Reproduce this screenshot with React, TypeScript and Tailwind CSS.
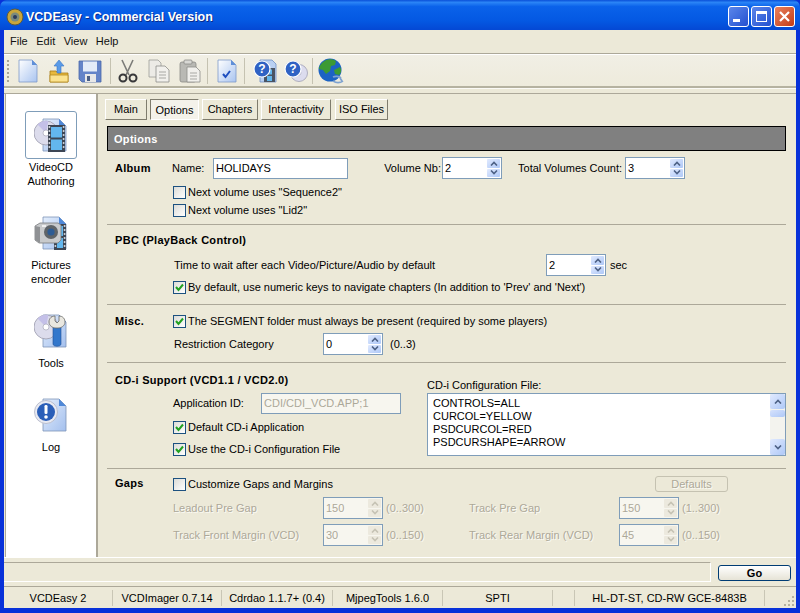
import React from "react";

const SANS = "font-['Liberation_Sans','Noto_Sans',sans-serif]";
const OFF = "text-[#aca899] [text-shadow:1px_1px_0_#fbfaf4]";
const HEAD = "pl-[8px] font-bold tracking-[0.3px]";

function DocShape({ id = "doc" }: { id?: string }) {
  return (
    <>
      <defs>
        <linearGradient id={id} x1="0" y1="0" x2="1" y2="1">
          <stop offset="0" stopColor="#ffffff" />
          <stop offset="1" stopColor="#a9c4f0" />
        </linearGradient>
      </defs>
      <path d="M3 1h13l5 5v17H3z" fill={`url(#${id})`} stroke="#7d9bc9" strokeWidth="0.8" />
      <path d="M16 1v5h5z" fill="#5f8fd8" />
    </>
  );
}

function NewIcon() {
  return (
    <svg width="24" height="24" viewBox="0 0 24 24">
      <DocShape id="newdoc" />
    </svg>
  );
}

function OpenIcon() {
  return (
    <svg width="24" height="24" viewBox="0 0 24 24">
      <path d="M3 12h6l2 2h10v9H3z" fill="#e8b93c" stroke="#a67c17" strokeWidth="0.8" />
      <path d="M3 16h18v7H3z" fill="#fbe38f" stroke="#b58a20" strokeWidth="0.8" />
      <path d="M12 1l5 6h-3v7h-4V7H7z" fill="#5a9be8" stroke="#3a76c4" strokeWidth="0.6" />
    </svg>
  );
}

function SaveIcon() {
  return (
    <svg width="24" height="24" viewBox="0 0 24 24">
      <path d="M1 2h22v21H4l-3-3z" fill="#6484c8" stroke="#4a68a8" strokeWidth="0.8" />
      <rect x="5" y="2.5" width="14" height="10" fill="#e4ecf8" />
      <rect x="7" y="15" width="11" height="8" fill="#e8e8e8" />
      <rect x="9" y="17" width="3" height="5" fill="#4b5f86" />
    </svg>
  );
}

function CutIcon() {
  return (
    <svg width="24" height="24" viewBox="0 0 24 24" fill="none">
      <path d="M6 1l7 15M17 1l-7 15" stroke="#7b7b78" strokeWidth="1.6" />
      <circle cx="7" cy="19" r="3.5" stroke="#38383a" strokeWidth="2" />
      <circle cx="17" cy="19" r="3.5" stroke="#38383a" strokeWidth="2" />
    </svg>
  );
}

function CopyIcon() {
  return (
    <svg width="24" height="24" viewBox="0 0 24 24">
      <path d="M2 1h9l3 3v14H2z" fill="#ecebe6" stroke="#9c9c98" strokeWidth="0.8" />
      <path d="M9 7h9l4 4v12H9z" fill="#f1f0ec" stroke="#8e8e8a" strokeWidth="0.8" />
      <path d="M12 13h7M12 16h7M12 19h7" stroke="#a8a8a4" strokeWidth="1" />
    </svg>
  );
}

function PasteIcon() {
  return (
    <svg width="24" height="24" viewBox="0 0 24 24">
      <rect x="2" y="3" width="16" height="20" rx="2" fill="#b9b9b4" stroke="#8a8a86" strokeWidth="0.8" />
      <rect x="6" y="1" width="8" height="4" rx="1" fill="#d8d8d4" stroke="#8a8a86" strokeWidth="0.8" />
      <path d="M9 8h9l4 4v11H9z" fill="#f1f0ec" stroke="#8e8e8a" strokeWidth="0.8" />
      <path d="M12 14h7M12 17h7M12 20h7" stroke="#a8a8a4" strokeWidth="1" />
    </svg>
  );
}

function CheckDocIcon() {
  return (
    <svg width="24" height="24" viewBox="0 0 24 24">
      <DocShape id="checkdoc" />
      <path d="M8 15l2.5 3L15 12" fill="none" stroke="#1f4fbf" strokeWidth="2" />
    </svg>
  );
}

function QuestionBall({ cx, cy, r }: { cx: number; cy: number; r: number }) {
  return (
    <>
      <circle cx={cx} cy={cy} r={r} fill="#2f62c4" stroke="#ffffff" strokeWidth="1.2" />
      <text x={cx} y={cy + r * 0.55} textAnchor="middle" fontSize={r * 1.5} fontWeight="700" fill="#ffffff" fontFamily="Liberation Sans">
        ?
      </text>
    </>
  );
}

function HelpFilmIcon() {
  return (
    <svg width="24" height="24" viewBox="0 0 24 24">
      <path d="M7 1h12l4 4v18H7z" fill="#b9d0f2" stroke="#6f8fc4" strokeWidth="0.8" />
      <rect x="11" y="9" width="11" height="14" fill="#4a5464" />
      <rect x="14" y="10.5" width="5" height="5" fill="#63b7ee" />
      <rect x="14" y="17" width="5" height="5" fill="#63b7ee" />
      <QuestionBall cx={9} cy={10} r={8} />
    </svg>
  );
}

function HelpCdIcon() {
  return (
    <svg width="24" height="24" viewBox="0 0 24 24">
      <circle cx="15" cy="14" r="8.5" fill="#dcdcee" stroke="#a0a0b4" strokeWidth="0.8" />
      <circle cx="15" cy="14" r="2" fill="#ffffff" stroke="#a0a0b4" strokeWidth="0.6" />
      <QuestionBall cx={9} cy={10} r={8} />
    </svg>
  );
}

function GlobeIcon() {
  return (
    <svg width="26" height="26" viewBox="0 0 26 26">
      <circle cx="12" cy="12" r="11.5" fill="#1c63c4" />
      <path d="M5 4c3-3 9-4 13-1l-1 4-4 1-1 5-4 3-3-4-4-1c0-3 2-5 4-7z" fill="#3c9a34" />
      <path d="M16 12l6-3c2 3 1 6-1 8l-4-1z" fill="#3c9a34" />
      <path d="M15 19c2-1 6-1 8 1M15 23c3 2 7 2 10 0M24 23l-2-3" fill="none" stroke="#7ea2d0" strokeWidth="1.8" />
    </svg>
  );
}

function SideBase({ id }: { id: string }) {
  return (
    <>
      <defs>
        <linearGradient id={id} x1="0" y1="0" x2="1" y2="1">
          <stop offset="0" stopColor="#e4eefc" />
          <stop offset="1" stopColor="#a4c0ee" />
        </linearGradient>
      </defs>
      <path d="M9 1h16l7 7v25H9z" fill={`url(#${id})`} stroke="#7d94b8" strokeWidth="0.8" />
      <path d="M25 1v7h7z" fill="#4f88d8" />
    </>
  );
}

function Cd({ cx, cy, r }: { cx: number; cy: number; r: number }) {
  return (
    <>
      <circle cx={cx} cy={cy} r={r} fill="#dcdcec" stroke="#9a9aac" strokeWidth="0.8" />
      <path d={`M${cx} ${cy}L${cx - r * 0.7} ${cy - r * 0.7}A${r} ${r} 0 0 1 ${cx + r * 0.2} ${cy - r}z`} fill="#c4c0e8" />
      <circle cx={cx} cy={cy} r={r * 0.25} fill="#ffffff" stroke="#9a9aac" strokeWidth="0.6" />
    </>
  );
}

// film strip with its sprocket holes down both edges
function Film({ x, y, w, h }: { x: number; y: number; w: number; h: number }) {
  const holes = Array.from({ length: Math.floor(h / 4) });
  const frame = (h - 6) / 2;
  return (
    <>
      <rect x={x} y={y} width={w} height={h} fill="#3d4654" />
      {holes.map((_, i) => (
        <React.Fragment key={i}>
          <rect x={x + 0.6} y={y + 1 + i * 4} width="1.6" height="2" fill="#c8ccd4" />
          <rect x={x + w - 2.2} y={y + 1 + i * 4} width="1.6" height="2" fill="#c8ccd4" />
        </React.Fragment>
      ))}
      <rect x={x + 3} y={y + 2} width={w - 6} height={frame} fill="#63b7ee" />
      <rect x={x + 3} y={y + 4 + frame} width={w - 6} height={frame} fill="#63b7ee" />
    </>
  );
}

function VideoCdIcon() {
  return (
    <svg width="34" height="34" viewBox="0 0 34 34">
      <SideBase id="sb1" />
      <Cd cx={12} cy={15} r={12} />
      <Film x={14} y={7} w={17} h={27} />
    </svg>
  );
}

function CameraIcon() {
  return (
    <svg width="34" height="34" viewBox="0 0 34 34">
      <SideBase id="sb2" />
      <Film x={20} y={8} w={12} h={26} />
      <path d="M1 10l5-3h18l3 2v15l-3 3H5l-4-3z" fill="#c8cacc" stroke="#77797c" strokeWidth="0.8" />
      <path d="M1 10l5 1v16l-5-3z" fill="#8f9194" />
      <rect x="8" y="9" width="4" height="2" fill="#f0f0f0" />
      <circle cx="17" cy="16" r="7" fill="#5f6468" />
      <circle cx="17" cy="16" r="3.6" fill="#2d5c94" />
    </svg>
  );
}

function ToolsIcon() {
  return (
    <svg width="34" height="34" viewBox="0 0 34 34">
      <SideBase id="sb3" />
      <Cd cx={12} cy={13} r={12} />
      <path d="M19 12h8v18c0 3-8 3-8 0z" fill="#3277cc" stroke="#1f4f96" strokeWidth="0.6" />
      <path d="M15 8c0-4 3-6 6-6v5l2 2 2-2V2c4 0 6 3 6 6 0 4-4 6-7 6h-2c-3 0-7-2-7-6z" fill="#e9e7e0" stroke="#6a6a66" strokeWidth="0.8" />
    </svg>
  );
}

function LogIcon() {
  return (
    <svg width="34" height="34" viewBox="0 0 34 34">
      <SideBase id="sb4" />
      <circle cx="12" cy="14" r="11.5" fill="#e8eaf2" stroke="#b0b4c4" strokeWidth="0.8" />
      <circle cx="12" cy="14" r="9" fill="#2b5fb8" />
      <rect x="10.5" y="7" width="3" height="9" rx="1.2" fill="#ffffff" />
      <circle cx="12" cy="19" r="1.8" fill="#ffffff" />
    </svg>
  );
}

function SideItem({ icon, lines, selected, className }: { icon: React.ReactNode; lines: string[]; selected?: boolean; className: string }) {
  return (
    <div className={`flex flex-col items-center ${className}`}>
      <div className={`w-[52px] h-[48px] flex items-center justify-center rounded-[3px] border ${selected ? "border-[#7f9db9]" : "border-transparent"}`}>
        {icon}
      </div>
      {lines.map((l) => (
        <div key={l} className="h-[14px] leading-[14px] mt-[1px] -mb-[1px] text-center">
          {l}
        </div>
      ))}
    </div>
  );
}

function Check({ label, checked }: { label: string; checked?: boolean }) {
  return (
    <div className="flex items-center h-[18px]">
      <div className="w-[13px] h-[13px] border border-[#1c5180] bg-gradient-to-br from-[#dcdcd7] to-white flex items-center justify-center">
        {checked && (
          <svg width="11" height="11" viewBox="0 0 11 11">
            <path d="M2 5l2.5 3L9 2.5" fill="none" stroke="#21a121" strokeWidth="2" />
          </svg>
        )}
      </div>
      <span className="ml-[2px]">{label}</span>
    </div>
  );
}

function Arrow({ up, color }: { up?: boolean; color: string }) {
  return (
    <svg width="8" height="5" viewBox="0 0 8 5">
      <path d={up ? "M1 4.5L4 1.5l3 3" : "M1 .5l3 3 3-3"} fill="none" stroke={color} strokeWidth="1.6" />
    </svg>
  );
}

function Spin({ value, disabled }: { value: string; disabled?: boolean }) {
  const btn = disabled ? "bg-[#ece9de]" : "bg-gradient-to-br from-[#e1eafe] to-[#aec8f7]";
  const arrow = disabled ? "#c5c2b4" : "#4d6185";
  return (
    <div className={`w-[60px] h-[22px] shrink-0 border border-[#7f9db9] flex items-stretch p-[1px] ${disabled ? "bg-[#f7f6ef] text-[#aca899]" : "bg-white"}`}>
      <div className="flex-1 pl-[1px] leading-[18px]">{value}</div>
      <div className="w-[13px] flex flex-col gap-[1px]">
        <div className={`flex-1 flex items-center justify-center rounded-[1px] ${btn}`}>
          <Arrow up color={arrow} />
        </div>
        <div className={`flex-1 flex items-center justify-center rounded-[1px] ${btn}`}>
          <Arrow color={arrow} />
        </div>
      </div>
    </div>
  );
}

function StatusCell({ w, text }: { w: string; text?: string }) {
  return (
    <div className={`${w} h-[16px] border-r border-[#c9c6b5] text-center leading-[16px] whitespace-nowrap`}>{text}</div>
  );
}

export default function App() {
  return (
    <div className={`w-[800px] h-[613px] overflow-hidden flex flex-col bg-[#0831d9] text-[11px] text-black ${SANS}`}>
      {/* title bar */}
      <div className="h-[30px] shrink-0 flex items-center pt-[3px] rounded-t-[7px] bg-[linear-gradient(#0a50d8_0%,#2a84f6_8%,#0a62ea_22%,#0458e2_70%,#0448d4_100%)] pl-[6px] pr-[5px]">
        <svg width="18" height="18" viewBox="0 0 18 18">
          <circle cx="9" cy="9" r="8" fill="#c9a63a" stroke="#5d5a3c" strokeWidth="1" />
          <circle cx="9" cy="9" r="4.5" fill="#7a8a7c" />
          <circle cx="9" cy="9" r="2" fill="#2a3a5c" />
        </svg>
        <div className="ml-[2px] mt-[1px] text-white font-bold text-[12.5px] [text-shadow:1px_1px_0_#0a2a8a]">VCDEasy - Commercial Version</div>
        <div className="ml-auto flex gap-[2px]">
          <div className="w-[21px] h-[21px] rounded-[3px] border border-white bg-gradient-to-br from-[#5c86ea] to-[#2450d0] flex items-end pl-[4px] pb-[4px]">
            <div className="w-[7px] h-[3px] bg-white" />
          </div>
          <div className="w-[21px] h-[21px] rounded-[3px] border border-white bg-gradient-to-br from-[#5c86ea] to-[#2450d0] flex items-center justify-center">
            <div className="w-[11px] h-[11px] border border-white border-t-[3px]" />
          </div>
          <div className="w-[21px] h-[21px] rounded-[3px] border border-white bg-gradient-to-br from-[#e9805c] to-[#c23a12] flex items-center justify-center">
            <svg width="13" height="13" viewBox="0 0 13 13">
              <path d="M2 2l9 9M11 2l-9 9" stroke="#ffffff" strokeWidth="2.2" />
            </svg>
          </div>
        </div>
      </div>

      {/* window body */}
      <div className="flex-1 min-h-0 mx-[4px] mb-[5px] flex flex-col bg-[#ece9d8]">
        {/* menu */}
        <div className="h-[24px] shrink-0 flex items-center pl-[6px] gap-[8.5px] border-b border-[#aca899] text-[#111]">
          <span>File</span>
          <span>Edit</span>
          <span>View</span>
          <span>Help</span>
        </div>
        {/* toolbar */}
        <div className="h-[34px] shrink-0 flex items-center pl-[3px] border-t border-white border-b-2 border-b-[#b5b2a0] bg-gradient-to-b from-[#f1efe5] to-[#eeebdc]">
          <div className="w-[2px] h-[22px] mr-[3px] border-l-2 border-dotted border-[#a8a596]" />
          <div className="w-[31px] flex justify-center"><NewIcon /></div>
          <div className="w-[31px] flex justify-center"><OpenIcon /></div>
          <div className="w-[31px] flex justify-center"><SaveIcon /></div>
          <div className="w-[7px] h-[26px] border-r border-[#c5c2b1] mr-[1px] -ml-[1px]" />
          <div className="w-[31px] flex justify-center"><CutIcon /></div>
          <div className="w-[31px] flex justify-center"><CopyIcon /></div>
          <div className="w-[31px] flex justify-center"><PasteIcon /></div>
          <div className="w-[3px] h-[26px] border-r border-[#c5c2b1]" />
          <div className="w-[31px] flex justify-center ml-[3px]"><CheckDocIcon /></div>
          <div className="w-[3px] h-[26px] border-r border-[#c5c2b1]" />
          <div className="w-[31px] flex justify-center ml-[4px]"><HelpFilmIcon /></div>
          <div className="w-[31px] flex justify-center"><HelpCdIcon /></div>
          <div className="w-[2px] h-[26px] border-r border-[#c5c2b1]" />
          <div className="w-[31px] flex justify-center ml-[2px]"><GlobeIcon /></div>
        </div>
        <div className="h-[6px] shrink-0 border-t border-[#fbfaf5] border-b border-b-[#aca899]" />

        {/* main */}
        <div className="h-[463px] shrink-0 flex">
          <div className="w-[93px] shrink-0 ml-[1px] bg-white border-l border-[#aca899] border-r-2 border-r-[#aca899]">
            <SideItem className="pt-[17px] h-[115px]" selected icon={<VideoCdIcon />} lines={["VideoCD", "Authoring"]} />
            <SideItem className="h-[98px]" icon={<CameraIcon />} lines={["Pictures", "encoder"]} />
            <SideItem className="h-[84px]" icon={<ToolsIcon />} lines={["Tools"]} />
            <SideItem className="" icon={<LogIcon />} lines={["Log"]} />
          </div>

          <div className="flex-1 min-w-0 pl-[9px] pr-[10px]">
            {/* tabs */}
            <div className="flex mt-[5px] h-[21px] -ml-[2px] text-center leading-[19px]">
              <div className="w-[42px] bg-[#ece9d8] border border-t-white border-l-white border-r-[#7f7c6d] border-b-[#7f7c6d]">Main</div>
              <div className="w-[49px] ml-[3px] bg-[#f4f2ea] border border-t-[#7f7c6d] border-l-[#7f7c6d] border-r-white border-b-white pt-[1px]">Options</div>
              <div className="w-[56px] ml-[3px] border border-t-white border-l-white border-r-[#7f7c6d] border-b-[#7f7c6d]">Chapters</div>
              <div className="w-[70px] ml-[3px] border border-t-white border-l-white border-r-[#7f7c6d] border-b-[#7f7c6d]">Interactivity</div>
              <div className="w-[53px] ml-[4px] border border-t-white border-l-white border-r-[#7f7c6d] border-b-[#7f7c6d]">ISO Files</div>
            </div>
            {/* header */}
            <div className="mt-[6px] h-[25px] bg-[#808080] border border-black text-white font-bold tracking-[0.3px] pl-[6px] leading-[25px]">Options</div>

            {/* album */}
            <div className="h-[74px] border-b border-[#aca899] pt-[6px]">
              <div className="flex items-center h-[22px]">
                <div className={`w-[65px] ${HEAD}`}>Album</div>
                <div className="w-[41px]">Name:</div>
                <div className="w-[135px] h-[21px] border border-[#7f9db9] bg-white pl-[2px] leading-[19px]">HOLIDAYS</div>
                <div className="w-[94px] text-right pr-[1px]">Volume Nb:</div>
                <Spin value="2" />
                <div className="w-[123px] text-right pr-[3px]">Total Volumes Count:</div>
                <Spin value="3" />
              </div>
              <div className="mt-[4px] ml-[66px]">
                <Check label={'Next volume uses "Sequence2"'} />
                <Check label={'Next volume uses "Lid2"'} />
              </div>
            </div>

            {/* pbc */}
            <div className="h-[80px] border-b border-[#aca899] pt-[7px]">
              <div className={`h-[16px] leading-[16px] ${HEAD}`}>PBC (PlayBack Control)</div>
              <div className="flex items-center h-[22px] mt-[6px] pl-[67px]">
                <div className="w-[372px]">Time to wait after each Video/Picture/Audio by default</div>
                <Spin value="2" />
                <div className="ml-[4px]">sec</div>
              </div>
              <div className="mt-[2px] ml-[66px]">
                <Check checked label="By default, use numeric keys to navigate chapters (In addition to 'Prev' and 'Next')" />
              </div>
            </div>

            {/* misc */}
            <div className="h-[58px] border-b border-[#aca899] pt-[7px]">
              <div className="flex items-center h-[18px]">
                <div className={`w-[66px] ${HEAD}`}>Misc.</div>
                <Check checked label="The SEGMENT folder must always be present (required by some players)" />
              </div>
              <div className="flex items-center h-[22px] mt-[3px] pl-[67px]">
                <div className="w-[149px]">Restriction Category</div>
                <Spin value="0" />
                <div className="ml-[7px]">(0..3)</div>
              </div>
            </div>

            {/* cd-i */}
            <div className="h-[106px] border-b border-[#aca899] flex">
              <div className="w-[320px] shrink-0 pt-[9px]">
                <div className={`h-[16px] leading-[16px] ${HEAD}`}>CD-i Support (VCD1.1 / VCD2.0)</div>
                <div className="flex items-center h-[21px] mt-[5px] pl-[66px]">
                  <div className="w-[88px]">Application ID:</div>
                  <div className="w-[140px] h-[21px] border border-[#7f9db9] bg-[#f7f6ef] text-[#aca899] pl-[2px] leading-[19px]">CDI/CDI_VCD.APP;1</div>
                </div>
                <div className="mt-[4px] ml-[66px]">
                  <Check checked label="Default CD-i Application" />
                </div>
                <div className="mt-[4px] ml-[66px]">
                  <Check checked label="Use the CD-i Configuration File" />
                </div>
              </div>
              <div className="flex-1 min-w-0 pt-[14px]">
                <div className="h-[16px] leading-[16px]">CD-i Configuration File:</div>
                <div className="h-[63px] border border-[#7f9db9] bg-white flex">
                  <div className="flex-1 pl-[5px] pt-[3px] leading-[13px]">
                    <div>CONTROLS=ALL</div>
                    <div>CURCOL=YELLOW</div>
                    <div>PSDCURCOL=RED</div>
                    <div>PSDCURSHAPE=ARROW</div>
                  </div>
                  <div className="w-[15px] flex flex-col bg-[#f3f3ee]">
                    <div className="h-[15px] bg-gradient-to-br from-[#e1eafe] to-[#aec8f7] rounded-[2px] flex items-center justify-center"><Arrow up color="#4d6185" /></div>
                    <div className="h-[7px] mt-[1px] bg-gradient-to-br from-[#d6e2fc] to-[#aec8f7] rounded-[2px]" />
                    <div className="flex-1" />
                    <div className="h-[16px] bg-gradient-to-br from-[#e1eafe] to-[#aec8f7] rounded-[2px] flex items-center justify-center"><Arrow color="#4d6185" /></div>
                  </div>
                </div>
              </div>
            </div>

            {/* gaps */}
            <div className="h-[87px] pt-[6px]">
              <div className="flex items-center h-[18px]">
                <div className={`w-[66px] -mt-[2px] ${HEAD}`}>Gaps</div>
                <Check label="Customize Gaps and Margins" />
                <div className={`ml-auto mr-[58px] w-[73px] h-[16px] border border-[#c5c2b1] rounded-[3px] text-center leading-[14px] ${OFF}`}>Defaults</div>
              </div>
              <div className={`flex items-center h-[22px] mt-[4px] pl-[66px] ${OFF}`}>
                <div className="w-[150px]">Leadout Pre Gap</div>
                <Spin value="150" disabled />
                <div className="ml-[3px] w-[83px]">(0..300)</div>
                <div className="w-[150px]">Track Pre Gap</div>
                <Spin value="150" disabled />
                <div className="ml-[3px]">(1..300)</div>
              </div>
              <div className={`flex items-center h-[22px] mt-[5px] pl-[66px] ${OFF}`}>
                <div className="w-[150px]">Track Front Margin (VCD)</div>
                <Spin value="30" disabled />
                <div className="ml-[3px] w-[83px]">(0..150)</div>
                <div className="w-[150px]">Track Rear Margin (VCD)</div>
                <Spin value="45" disabled />
                <div className="ml-[3px]">(0..150)</div>
              </div>
            </div>
          </div>
        </div>

        {/* go bar */}
        <div className="h-[29px] shrink-0 flex border-t border-white">
          <div className="w-[707px] h-[20px] mt-[4px] border-t border-t-[#aca899] border-b border-b-white border-r border-r-white" />
          <div className="ml-[7px] mt-[7px] w-[73px] h-[16px] rounded-[3px] border border-[#003c74] bg-gradient-to-b from-white to-[#e6e3d6] font-bold text-center leading-[14px]">Go</div>
        </div>

        {/* status */}
        <div className="flex-1 min-h-0 flex items-center border-t border-[#aca899] text-center">
          <StatusCell w="w-[109px]" text="VCDEasy 2" />
          <StatusCell w="w-[109px]" text="VCDImager 0.7.14" />
          <StatusCell w="w-[111px]" text="Cdrdao 1.1.7+ (0.4)" />
          <StatusCell w="w-[110px]" text="MjpegTools 1.6.0" />
          <StatusCell w="w-[110px]" text="SPTI" />
          <StatusCell w="w-[22px]" />
          <StatusCell w="w-[190px]" text="HL-DT-ST, CD-RW GCE-8483B" />
          <svg className="ml-auto mr-[1px] self-end mb-[1px]" width="12" height="12" viewBox="0 0 12 12" fill="#b5b2a0">
            <rect x="9" y="1" width="2" height="2" />
            <rect x="5" y="5" width="2" height="2" />
            <rect x="9" y="5" width="2" height="2" />
            <rect x="1" y="9" width="2" height="2" />
            <rect x="5" y="9" width="2" height="2" />
            <rect x="9" y="9" width="2" height="2" />
          </svg>
        </div>
      </div>
    </div>
  );
}
